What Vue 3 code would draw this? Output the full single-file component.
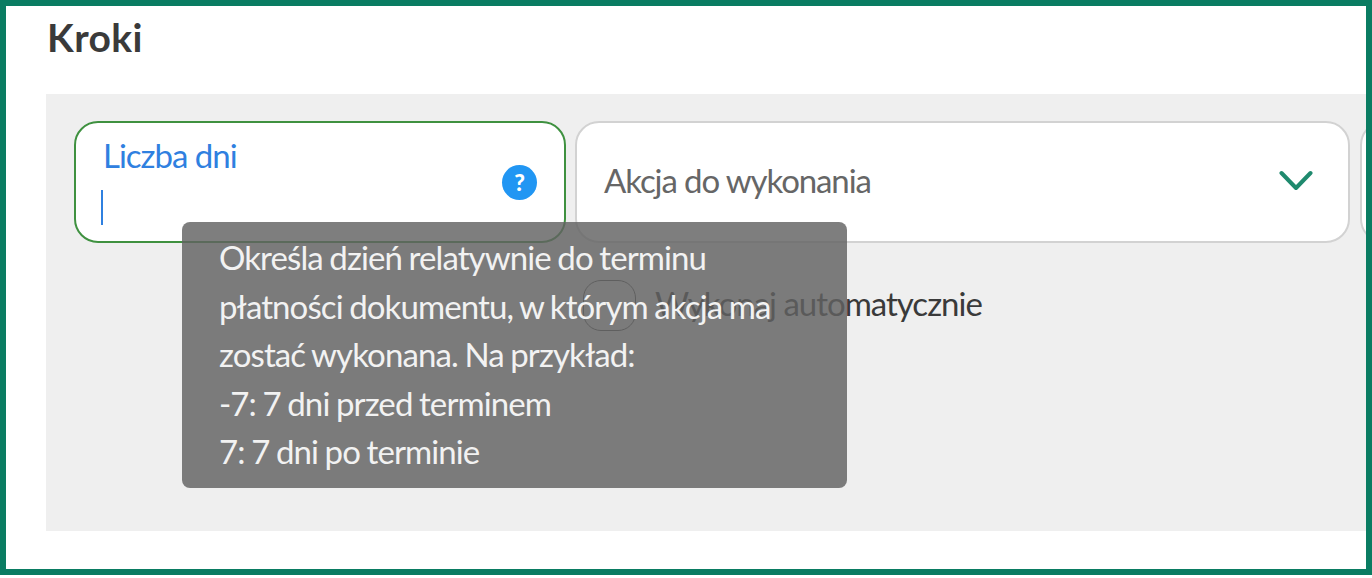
<template>
  <div class="frame">
    <h2 class="title">Kroki</h2>
    <section class="panel">
      <div class="fields">
        <div class="field field-active">
          <label class="float-label">Liczba dni</label>
          <span class="caret"></span>
          <span class="help">?</span>
        </div>
        <div class="field field-select">
          <span class="select-text">Akcja do wykonania</span>
          <svg class="chevron" viewBox="0 0 34 21" width="34" height="21" fill="none">
            <path d="M2.5 3 L17 18 L31.5 3" stroke="#1f8a6e" stroke-width="4" stroke-linecap="round" stroke-linejoin="round" />
          </svg>
        </div>
        <div class="field field-next"></div>
      </div>
      <div class="auto-row">
        <span class="checkbox"></span>
        <span class="auto-label">Wykonaj automatycznie</span>
      </div>
      <div class="tooltip">
        <div v-for="line in tooltipLines" :key="line">{{ line }}</div>
      </div>
    </section>
  </div>
</template>

<script setup>
const tooltipLines = [
  "Określa dzień relatywnie do terminu",
  "płatności dokumentu, w którym akcja ma",
  "zostać wykonana. Na przykład:",
  "-7: 7 dni przed terminem",
  "7: 7 dni po terminie",
];
</script>

<style>
html,
body {
  margin: 0;
  background: #fff;
}
</style>

<style scoped>
.frame {
  box-sizing: border-box;
  width: 1372px;
  height: 575px;
  border: 6px solid #0a7c62;
  background: #fff;
  overflow: hidden;
  font-family: Lato, "Open Sans", sans-serif;
  color: #333;
}

.title {
  margin: 13px 0 0 41px;
  font-size: 39px;
  line-height: 36px;
  font-weight: 700;
  letter-spacing: 0.4px;
  color: #3a3a3a;
}

.panel {
  position: relative;
  box-sizing: border-box;
  height: 437px;
  margin: 39px 0 0 40px;
  padding: 27px 0 0 28px;
  background: #efefef;
  overflow: hidden;
}

.fields {
  display: flex;
  gap: 9px;
}

.field {
  position: relative;
  flex: none;
  box-sizing: border-box;
  height: 122px;
  border: 2px solid #d2d2d2;
  border-radius: 24px;
  background: #fff;
}

.field-active {
  width: 492px;
  border-color: #3f9140;
}

.float-label {
  position: absolute;
  left: 27px;
  top: 12px;
  font-size: 33px;
  line-height: 40px;
  letter-spacing: -1px;
  color: #2f80e0;
}

.caret {
  position: absolute;
  left: 25px;
  top: 67px;
  width: 2px;
  height: 35px;
  background: #2f80e0;
}

.help {
  position: absolute;
  right: 27px;
  top: 42px;
  width: 35px;
  height: 35px;
  border-radius: 50%;
  background: #2196f3;
  color: #fff;
  font-size: 23px;
  line-height: 35px;
  font-weight: 900;
  text-align: center;
}

.field-select {
  display: flex;
  align-items: center;
  justify-content: space-between;
  width: 775px;
  padding: 0 35px 0 27px;
}

.select-text {
  margin-top: -5px;
  font-size: 33px;
  letter-spacing: -1.1px;
  color: #666;
}

.chevron {
  margin-top: -4px;
}

.field-next {
  width: 200px;
  margin-left: 1px;
}

.auto-row {
  display: flex;
  align-items: center;
  gap: 19px;
  margin: 37px 0 0 509px;
}

.checkbox {
  flex: none;
  box-sizing: border-box;
  width: 53px;
  height: 51px;
  border: 1px solid #555;
  border-radius: 18px;
}

.auto-label {
  margin-top: -5px;
  font-size: 33px;
  letter-spacing: -1px;
  color: #3a3a3a;
}

.tooltip {
  position: absolute;
  left: 136px;
  top: 128px;
  box-sizing: border-box;
  width: 665px;
  height: 266px;
  padding: 11px 0 0 37px;
  border-radius: 8px;
  background: rgba(97, 97, 97, 0.82);
  color: #f2f2f2;
  font-size: 33px;
  line-height: 48.5px;
  letter-spacing: -0.9px;
  word-spacing: -1px;
  white-space: nowrap;
}
</style>
